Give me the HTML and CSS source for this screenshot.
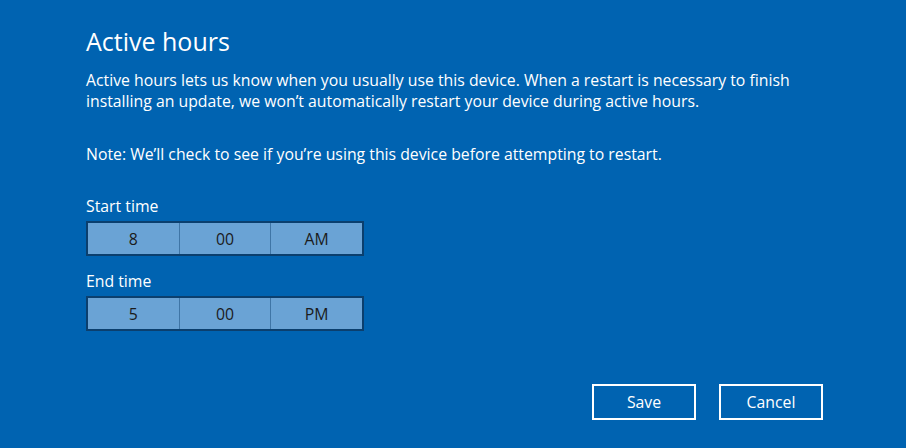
FILE: index.html
```html
<!DOCTYPE html>
<html>
<head>
<meta charset="utf-8">
<link rel="stylesheet" href="styles.css">
</head>
<body>
<div class="dialog">
  <h1 class="title">Active hours</h1>
  <p class="desc">Active hours lets us know when you usually use this device. When a restart is necessary to finish<br>installing an update, we won’t automatically restart your device during active hours.</p>
  <p class="note">Note: We’ll check to see if you’re using this device before attempting to restart.</p>
  <div class="field">
    <div class="label">Start time</div>
    <div class="picker">
      <div class="cell">8</div>
      <div class="cell">00</div>
      <div class="cell">AM</div>
    </div>
  </div>
  <div class="field">
    <div class="label">End time</div>
    <div class="picker">
      <div class="cell">5</div>
      <div class="cell">00</div>
      <div class="cell">PM</div>
    </div>
  </div>
  <div class="actions">
    <button class="btn">Save</button>
    <button class="btn">Cancel</button>
  </div>
</div>
</body>
</html>
```

FILE: styles.css
```css
html, body {
  margin: 0;
  padding: 0;
  height: 100%;
}
body {
  background: #0063b1;
  color: #ffffff;
  font-family: "Open Sans", "Noto Sans", sans-serif;
}
.dialog {
  display: flex;
  flex-direction: column;
  padding: 24px 0 0 86px;
  width: 737px;
}
.title {
  margin: 0;
  font-size: 25px;
  font-weight: 400;
  line-height: 34px;
}
.desc {
  margin: 12px 0 0;
  font-size: 15.8px;
  line-height: 21px;
}
.note {
  margin: 32px 0 0;
  font-size: 15.8px;
  line-height: 21px;
}
.field {
  display: flex;
  flex-direction: column;
  margin-top: 31px;
}
.field + .field {
  margin-top: 15px;
}
.label {
  font-size: 15.8px;
  line-height: 20px;
  margin-bottom: 5px;
}
.picker {
  display: flex;
  width: 278px;
  height: 35px;
  box-sizing: border-box;
  border: 2px solid #0b3f6e;
  background: #6aa3d5;
}
.cell {
  flex: 1;
  display: flex;
  align-items: center;
  justify-content: center;
  color: #1b1b1b;
  font-size: 15.8px;
}
.cell + .cell {
  border-left: 1px solid #3f75a6;
}
.actions {
  display: flex;
  justify-content: flex-end;
  gap: 23px;
  margin-top: 53px;
}
.btn {
  width: 104px;
  height: 36px;
  box-sizing: border-box;
  border: 2px solid #ffffff;
  background: transparent;
  color: #ffffff;
  font-family: inherit;
  font-size: 15.8px;
  padding: 0;
}
```
